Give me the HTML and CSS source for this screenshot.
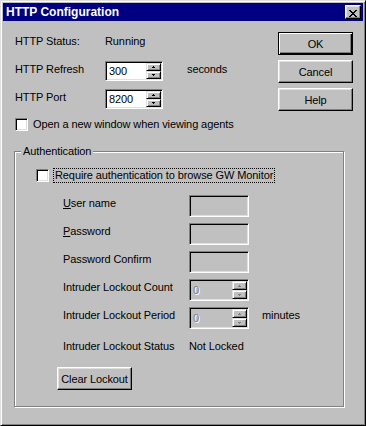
FILE: index.html
```html
<!DOCTYPE html>
<html>
<head>
<title>HTTP Configuration</title>
<link rel="stylesheet" href="styles.css">
</head>
<body>
	<div class="window">
		<div class="titlebar">
			<span class="title">HTTP Configuration</span>
			<button class="close">
				<svg width="8" height="7" viewBox="0 0 8 7"><path d="M0 0h2v1h-2z M6 0h2v1h-2z M1 1h2v1h-2z M5 1h2v1h-2z M2 2h4v1h-4z M3 3h2v1h-2z M2 4h4v1h-4z M1 5h2v1h-2z M5 5h2v1h-2z M0 6h2v1h-2z M6 6h2v1h-2z" fill="#000"/></svg>
			</button>
		</div>
		<div class="body">
			<div class="top">
				<div class="settings">
					<div class="row status">
						<span class="label">HTTP Status:</span>
						<span>Running</span>
					</div>
					<div class="row">
						<span class="label">HTTP Refresh</span>
						<div class="spin">
							<span class="spin-value">300</span>
							<span class="spin-buttons">
								<span class="spin-btn"><svg width="3" height="2" viewBox="0 0 3 2"><path d="M1 0h1v1h1v1h-3v-1h1z"/></svg></span>
								<span class="spin-btn"><svg width="3" height="2" viewBox="0 0 3 2"><path d="M0 0h3v1h-1v1h-1v-1h-1z"/></svg></span>
							</span>
						</div>
						<span class="unit">seconds</span>
					</div>
					<div class="row">
						<span class="label">HTTP Port</span>
						<div class="spin">
							<span class="spin-value">8200</span>
							<span class="spin-buttons">
								<span class="spin-btn"><svg width="3" height="2" viewBox="0 0 3 2"><path d="M1 0h1v1h1v1h-3v-1h1z"/></svg></span>
								<span class="spin-btn"><svg width="3" height="2" viewBox="0 0 3 2"><path d="M0 0h3v1h-1v1h-1v-1h-1z"/></svg></span>
							</span>
						</div>
					</div>
					<div class="check-row">
						<span class="checkbox"></span>
						<span>Open a new window when viewing agents</span>
					</div>
				</div>
				<div class="actions">
					<button class="btn btn-default">OK</button>
					<button class="btn">Cancel</button>
					<button class="btn">Help</button>
				</div>
			</div>

			<fieldset class="group">
				<legend>Authentication</legend>
				<div class="group-body">
					<div class="check-row auth-check">
						<span class="checkbox"></span>
						<span class="focus">Require authentication to browse GW Monitor</span>
					</div>
					<div class="fields">
						<span class="label"><u>U</u>ser name</span>
						<span class="edit"></span>
						<span></span>

						<span class="label"><u>P</u>assword</span>
						<span class="edit"></span>
						<span></span>

						<span class="label">Password Confirm</span>
						<span class="edit"></span>
						<span></span>

						<span class="label">Intruder Lockout Count</span>
						<div class="spin spin-off">
							<span class="spin-value">0</span>
							<span class="spin-buttons">
								<span class="spin-btn"><svg width="3" height="2" viewBox="0 0 3 2"><path d="M1 0h1v1h1v1h-3v-1h1z"/></svg></span>
								<span class="spin-btn"><svg width="3" height="2" viewBox="0 0 3 2"><path d="M0 0h3v1h-1v1h-1v-1h-1z"/></svg></span>
							</span>
						</div>
						<span></span>

						<span class="label">Intruder Lockout Period</span>
						<div class="spin spin-off">
							<span class="spin-value">0</span>
							<span class="spin-buttons">
								<span class="spin-btn"><svg width="3" height="2" viewBox="0 0 3 2"><path d="M1 0h1v1h1v1h-3v-1h1z"/></svg></span>
								<span class="spin-btn"><svg width="3" height="2" viewBox="0 0 3 2"><path d="M0 0h3v1h-1v1h-1v-1h-1z"/></svg></span>
							</span>
						</div>
						<span class="label minutes">minutes</span>
					</div>
					<div class="lock-status">
						<span>Intruder Lockout Status</span>
						<span>Not Locked</span>
					</div>
					<button class="btn btn-clear">Clear Lockout</button>
				</div>
			</fieldset>
		</div>
	</div>
</body>
</html>
```

FILE: styles.css
```css
* {
	box-sizing: border-box;
}
body {
	margin: 0;
	background-color: #c0c0c0;
	font-family: "Liberation Sans", Arial, sans-serif;
	font-size: 11px;
	line-height: 13px;
	letter-spacing: -0.1px;
	color: #000;
}
.window {
	width: 366px;
	height: 426px;
	padding: 2px;
	border: 1px solid;
	border-color: #dfdfdf #000 #000 #dfdfdf;
	box-shadow: inset 1px 1px #fff, inset -1px -1px #808080;
	background-color: #c0c0c0;
}
.titlebar {
	height: 18px;
	display: flex;
	align-items: center;
	justify-content: space-between;
	padding: 0 2px 0 3px;
	background-color: #000080;
}
.title {
	color: #fff;
	font-weight: bold;
	font-size: 12px;
	letter-spacing: 0;
}
.close {
	display: block;
	width: 16px;
	height: 14px;
	padding: 2px 0 0 3px;
	border: 1px solid;
	border-color: #fff #000 #000 #fff;
	box-shadow: inset -1px -1px #808080, inset 1px 1px #dfdfdf;
	background-color: #c0c0c0;
}
.close svg {
	display: block;
}
.body {
	padding: 11px 10px 0 11px;
}
.top {
	display: flex;
	justify-content: space-between;
}
.settings {
	display: flex;
	flex-direction: column;
	gap: 8px;
	padding-left: 1px;
}
.row {
	display: flex;
	align-items: flex-start;
}
.row .label {
	width: 90px;
	padding-top: 2px;
}
.status {
	height: 21px;
	line-height: 18px;
}
.status .label {
	padding-top: 0;
}
.unit {
	margin-left: 24px;
	padding-top: 2px;
}

/* sunken boxes */
.spin,
.edit,
.checkbox {
	border: 1px solid;
	border-color: #808080 #fff #fff #808080;
	box-shadow: inset 1px 1px #000, inset -1px -1px #dfdfdf;
}
.spin {
	width: 58px;
	height: 20px;
	padding: 1px;
	display: flex;
	background-color: #fff;
}
.spin-value {
	flex: 1;
	padding-left: 2px;
	line-height: 17px;
}
.spin-buttons {
	width: 15px;
	display: flex;
	flex-direction: column;
}
.spin-btn {
	flex: 1;
	display: flex;
	align-items: center;
	justify-content: center;
	border: 1px solid;
	border-color: #dfdfdf #000 #000 #dfdfdf;
	box-shadow: inset 1px 1px #fff, inset -1px -1px #808080;
	background-color: #c0c0c0;
}
.spin-btn svg {
	display: block;
	fill: #000;
}
.spin-off {
	width: 60px;
	height: 22px;
	background-color: #c0c0c0;
}
.spin-off .spin-value {
	color: #808080;
	text-shadow: 1px 1px #fff;
	line-height: 19px;
}
.spin-off .spin-btn svg {
	fill: #808080;
}
.edit {
	width: 60px;
	height: 22px;
	background-color: #c0c0c0;
}
.check-row {
	display: flex;
	align-items: center;
	gap: 5px;
	height: 14px;
}
.checkbox {
	width: 13px;
	height: 13px;
	background-color: #fff;
}

/* push buttons */
.actions {
	display: flex;
	flex-direction: column;
	gap: 5px;
}
.btn {
	width: 75px;
	height: 23px;
	padding: 0;
	font-family: inherit;
	font-size: 11px;
	letter-spacing: -0.1px;
	color: #000;
	border: 1px solid;
	border-color: #fff #000 #000 #fff;
	box-shadow: inset -1px -1px #808080, inset 1px 1px #dfdfdf;
	background-color: #c0c0c0;
}
.btn-default {
	border-color: #000;
	box-shadow: inset 1px 1px #fff, inset -1px -1px #000, inset -2px -2px #808080;
}

/* group box */
.group {
	width: 330px;
	min-width: 0;
	margin: 14px 0 0;
	padding: 0;
	border: 1px solid #808080;
	box-shadow: inset 1px 1px #fff, 1px 1px #fff;
}
.group legend {
	margin-left: 6px;
	padding: 0 2px;
	line-height: 13px;
	background-color: #c0c0c0;
}
.group-body {
	padding: 10px 0 16px 21px;
}
.auth-check {
	height: 15px;
	gap: 4px;
}
.focus {
	border: 1px dotted #000;
	padding: 0 1px;
	line-height: 13px;
}
.fields {
	display: grid;
	grid-template-columns: 126px 60px auto;
	row-gap: 6px;
	margin: 12px 0 0 27px;
	align-items: start;
}
.fields .label {
	padding-top: 2px;
}
.minutes {
	margin-left: 13px;
}
.lock-status {
	display: grid;
	grid-template-columns: 126px auto;
	margin: 8px 0 0 27px;
	height: 18px;
	line-height: 18px;
}
.btn-clear {
	display: block;
	margin: 12px 0 0 21px;
}
```
